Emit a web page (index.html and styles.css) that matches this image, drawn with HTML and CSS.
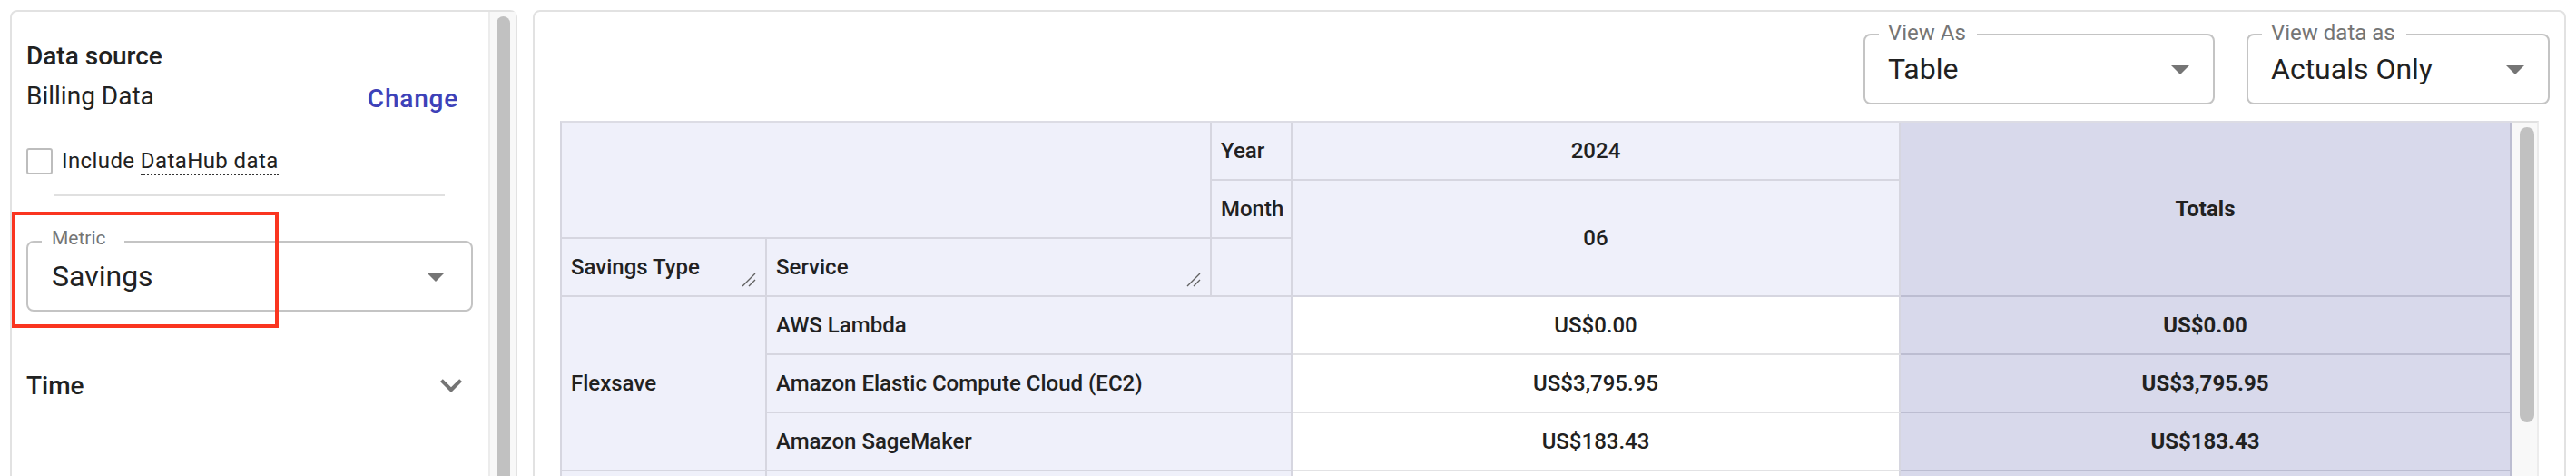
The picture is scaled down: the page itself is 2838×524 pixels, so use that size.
FILE: index.html
```html
<!DOCTYPE html>
<html lang="en">
<head>
  <meta charset="UTF-8">
  <title>Savings report</title>
  <meta name="viewport" content="width=device-width, initial-scale=1">
  <link rel="stylesheet" href="styles.css">
</head>
<body>
  <div class="layout">
    <aside class="sidebar">
      <div class="sidebar-content">
        <div class="section-title">Data source</div>
        <div class="source-row">
          <span class="source-name">Billing Data</span>
          <button class="link-button" type="button">Change</button>
        </div>
        <label class="check-row">
          <span class="checkbox"></span>
          <span>Include <span class="dotted">DataHub data</span></span>
        </label>
        <hr class="divider">
        <fieldset class="select select-metric">
          <legend>Metric</legend>
          <div class="select-value">
            <span>Savings</span>
            <svg class="arrow" viewBox="0 0 24 24"><path d="M7 10l5 5 5-5z"/></svg>
          </div>
        </fieldset>
        <div class="accordion-row">
          <span>Time</span>
          <svg class="chevron" viewBox="0 0 24 24"><path d="M16.59 8.59 12 13.17 7.41 8.59 6 10l6 6 6-6z"/></svg>
        </div>
      </div>
      <div class="scroll-track"><div class="scroll-thumb"></div></div>
      <div class="highlight"></div>
    </aside>

    <main class="report">
      <div class="toolbar">
        <fieldset class="select select-view">
          <legend>View As</legend>
          <div class="select-value">
            <span>Table</span>
            <svg class="arrow" viewBox="0 0 24 24"><path d="M7 10l5 5 5-5z"/></svg>
          </div>
        </fieldset>
        <fieldset class="select select-data">
          <legend>View data as</legend>
          <div class="select-value">
            <span>Actuals Only</span>
            <svg class="arrow" viewBox="0 0 24 24"><path d="M7 10l5 5 5-5z"/></svg>
          </div>
        </fieldset>
      </div>

      <div class="table-wrap">
        <table class="pivot">
          <colgroup>
            <col class="col-type">
            <col class="col-service">
            <col class="col-axis">
            <col class="col-month">
            <col class="col-total">
          </colgroup>
          <thead>
            <tr>
              <th colspan="2" rowspan="2"></th>
              <th class="axis">Year</th>
              <th class="col-head">2024</th>
              <th class="total-head" rowspan="3">Totals</th>
            </tr>
            <tr>
              <th class="axis">Month</th>
              <th class="col-head" rowspan="2">06</th>
            </tr>
            <tr>
              <th class="row-head">Savings Type
                <svg class="grip" viewBox="0 0 16 16"><path d="M15 1 1 15M15 8 8 15"/></svg>
              </th>
              <th class="row-head">Service
                <svg class="grip" viewBox="0 0 16 16"><path d="M15 1 1 15M15 8 8 15"/></svg>
              </th>
              <th></th>
            </tr>
          </thead>
          <tbody>
            <tr>
              <th class="group" rowspan="3">Flexsave</th>
              <th colspan="2">AWS Lambda</th>
              <td>US$0.00</td>
              <td class="total">US$0.00</td>
            </tr>
            <tr>
              <th colspan="2">Amazon Elastic Compute Cloud (EC2)</th>
              <td>US$3,795.95</td>
              <td class="total">US$3,795.95</td>
            </tr>
            <tr>
              <th colspan="2">Amazon SageMaker</th>
              <td>US$183.43</td>
              <td class="total">US$183.43</td>
            </tr>
            <tr>
              <th class="group"></th>
              <th colspan="2"></th>
              <td></td>
              <td class="total"></td>
            </tr>
          </tbody>
        </table>
        <div class="scroll-track table-track"><div class="scroll-thumb"></div></div>
      </div>
    </main>
  </div>
</body>
</html>
```

FILE: styles.css
```css
* {
  box-sizing: border-box;
}
body {
  margin: 0;
  background: #fff;
  color: #212121;
  font-family: Roboto, "Noto Sans", Arial, sans-serif;
}
.layout {
  display: flex;
  gap: 17px;
  height: 524px;
  padding: 11px 13px 0 11px;
  overflow: hidden;
}

/* left panel */
.sidebar {
  position: relative;
  flex: 0 0 559px;
  height: 620px;
  display: flex;
  border: 2px solid #e2e2e2;
  border-radius: 8px 8px 0 0;
}
.sidebar-content {
  flex: 1;
  padding: 29px 17px 0 16px;
}
.section-title {
  font-size: 28px;
  font-weight: 500;
  line-height: 40px;
}
.source-row {
  display: flex;
  justify-content: space-between;
  align-items: flex-start;
}
.source-name {
  font-size: 28px;
  line-height: 48px;
}
.link-button {
  margin-top: 3px;
  padding: 0 16px 0 0;
  background: none;
  border: none;
  color: #3d41b8;
  font-family: inherit;
  font-size: 28px;
  font-weight: 500;
  line-height: 48px;
  letter-spacing: 0.8px;
  cursor: pointer;
}
.check-row {
  display: flex;
  align-items: center;
  gap: 10px;
  height: 36px;
  margin-top: 26px;
  font-size: 24px;
  letter-spacing: 0.4px;
}
.checkbox {
  width: 29px;
  height: 29px;
  border: 2px solid #bdbdbd;
  border-radius: 3px;
}
.dotted {
  border-bottom: 2px dotted #333;
}
.divider {
  height: 0;
  margin: 19px 31px 0;
  border: 0;
  border-top: 2px solid #e0e0e0;
}
.accordion-row {
  display: flex;
  justify-content: space-between;
  align-items: center;
  height: 48px;
  margin-top: 57px;
  font-size: 28px;
  font-weight: 500;
}
.chevron {
  width: 48px;
  height: 48px;
  fill: #757575;
}
.highlight {
  position: absolute;
  left: 0;
  top: 220px;
  width: 294px;
  height: 128px;
  border: 4px solid #fa3520;
}

/* scrollbars */
.scroll-track {
  flex: 0 0 30px;
  padding: 5px 0 0 7px;
  background: #f8f8f8;
  border-left: 2px solid #ececec;
}
.scroll-thumb {
  width: 15px;
  height: 700px;
  background: #c1c1c1;
  border-radius: 8px;
}
.table-track {
  padding: 5px 0 0 9px;
  border-left: none;
  border-top: 2px solid #e0e0e0;
  border-right: 2px solid #ececec;
}
.table-track .scroll-thumb {
  width: 16px;
  height: 325px;
}

/* outlined selects */
.select {
  min-width: 0;
  margin: 0;
  padding: 0;
  border: 2px solid #c4c4c4;
  border-radius: 8px;
}
.select legend {
  margin-left: 15px;
  padding: 0 12px 4px 10px;
  color: #757575;
  font-size: 24px;
  line-height: 28px;
}
.select-value {
  display: flex;
  justify-content: space-between;
  align-items: center;
  height: 59px;
  padding: 0 12px 15px 25px;
  font-size: 32px;
  line-height: 44px;
}
.arrow {
  width: 48px;
  height: 48px;
  margin: -2px 0;
  fill: #757575;
}
.select-metric {
  margin-top: 34px;
}
.select-metric legend {
  padding: 0 20px 8px 11px;
  font-size: 21px;
  line-height: 24px;
}
.select-metric .select-value {
  padding: 0 15px 15px 26px;
}
.select-view {
  width: 387px;
}
.select-data {
  width: 334px;
}

/* right panel */
.report {
  flex: 1;
  height: 620px;
  padding: 9px 16px 0 28px;
  border: 2px solid #e2e2e2;
  border-radius: 8px 8px 0 0;
}
.toolbar {
  display: flex;
  justify-content: flex-end;
  gap: 35px;
}
.table-wrap {
  display: flex;
  margin: 18px 12px 0 0;
}
.pivot {
  width: 2150px;
  table-layout: fixed;
  border-collapse: separate;
  border-spacing: 0;
  border-top: 2px solid #dcdce4;
  border-left: 2px solid #d6d6e0;
  font-size: 24px;
  line-height: 28px;
}
.col-type { width: 226px; }
.col-service { width: 490px; }
.col-axis { width: 89px; }
.col-month { width: 670px; }
.col-total { width: 673px; }
.pivot tr {
  height: 64px;
}
.pivot th,
.pivot td {
  padding: 0 10px;
  border-right: 2px solid #d6d6e0;
  border-bottom: 2px solid #d6d6e0;
  font-weight: 500;
  text-align: left;
  vertical-align: middle;
  white-space: nowrap;
  overflow: hidden;
}
.pivot th {
  background: #eff0fa;
}
.pivot td {
  background: #fff;
  text-align: center;
  border-bottom-color: #e2e2e4;
}
.pivot .col-head {
  text-align: center;
}
.pivot .total-head,
.pivot .total {
  background: #d8d9eb;
  border-right-color: #bcbdd1;
  border-bottom-color: #bcbdd1;
  font-weight: 700;
  text-align: center;
}
.row-head {
  position: relative;
}
.grip {
  position: absolute;
  right: 10px;
  bottom: 9px;
  width: 16px;
  height: 16px;
  stroke: #616161;
  stroke-width: 1.4;
  fill: none;
}
```
